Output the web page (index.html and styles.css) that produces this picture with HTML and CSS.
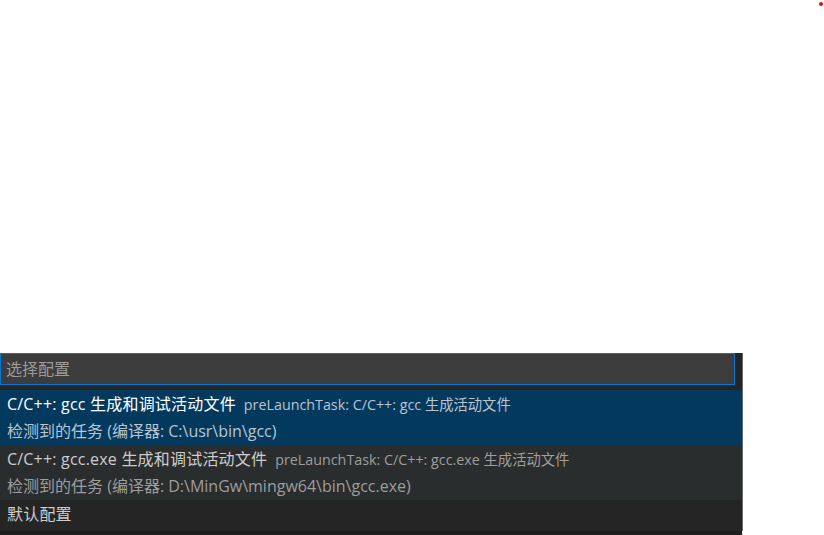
FILE: index.html
```html
<!DOCTYPE html>
<html>
<head>
<meta charset="utf-8">
<link rel="stylesheet" href="styles.css">
</head>
<body>
<div class="dot"></div>
<div class="space"></div>
<div class="panel">
  <div class="input-wrap">
    <div class="input">选择配置</div>
  </div>
  <div class="item selected">
    <div class="line1"><span class="label">C/C++: gcc 生成和调试活动文件</span><span class="desc">preLaunchTask: C/C++: gcc 生成活动文件</span></div>
    <div class="line2">检测到的任务 (编译器: C:\usr\bin\gcc)</div>
  </div>
  <div class="item hover">
    <div class="line1"><span class="label">C/C++: gcc.exe 生成和调试活动文件</span><span class="desc">preLaunchTask: C/C++: gcc.exe 生成活动文件</span></div>
    <div class="line2">检测到的任务 (编译器: D:\MinGw\mingw64\bin\gcc.exe)</div>
  </div>
  <div class="item single">
    <div class="line1"><span class="label">默认配置</span></div>
  </div>
</div>
<div class="under">录器 &nbsp; &nbsp; &nbsp; &nbsp; 的情利灵 &nbsp; &nbsp; &nbsp; &nbsp; &nbsp; 正在打 &nbsp; &nbsp; 并且包含了</div>
</body>
</html>
```
FILE: styles.css
```css
html, body {
  margin: 0;
  padding: 0;
  background: #ffffff;
  width: 824px;
  height: 535px;
  overflow: hidden;
  font-family: "Open Sans", "Noto Sans CJK SC", sans-serif;
}
.dot {
  position: absolute;
  left: 819px;
  top: 2px;
  width: 4px;
  height: 4px;
  border-radius: 50%;
  background: #e51400;
}
.space {
  height: 353px;
}
.panel {
  width: 742px;
  background: #252526;
  border-right: 1px solid #6b6b6b;
}
.input-wrap {
  padding: 0 7px 5px 0;
}
.input {
  box-sizing: border-box;
  height: 32px;
  background: #3c3c3c;
  border: 1px solid #0078d4;
  color: #9b9b9b;
  font-size: 16px;
  line-height: 30px;
  padding-left: 5px;
}
.item {
  height: 55px;
  padding-left: 7px;
  display: flex;
  flex-direction: column;
}
.item .line1, .item .line2 {
  height: 27px;
  line-height: 27px;
  white-space: nowrap;
}
.item .line1 {
  padding-top: 1px;
}
.label {
  font-size: 16px;
  letter-spacing: 0.2px;
  margin-right: 8px;
}
.desc {
  font-size: 14.3px;
}
.line2 {
  font-size: 16px;
}
.selected {
  background: #04395e;
}
.selected .label { color: #ffffff; }
.selected .desc { color: #b9c4cf; }
.selected .line2 { color: #b9c4cf; }
.hover {
  background: #2a2d2e;
}
.hover .label { color: #cccccc; }
.hover .desc { color: #9d9d9d; }
.hover .line2 { color: #9d9d9d; }
.single {
  height: 31px;
}
.single .line1 {
  height: 31px;
  line-height: 29px;
  padding-top: 0;
}
.single .label { color: #cccccc; }
.under {
  width: 742px;
  height: 4px;
  overflow: visible;
  background: #1e1e1e;
  color: #cccccc;
  font-size: 16px;
  line-height: 24px;
  white-space: nowrap;
}
```
